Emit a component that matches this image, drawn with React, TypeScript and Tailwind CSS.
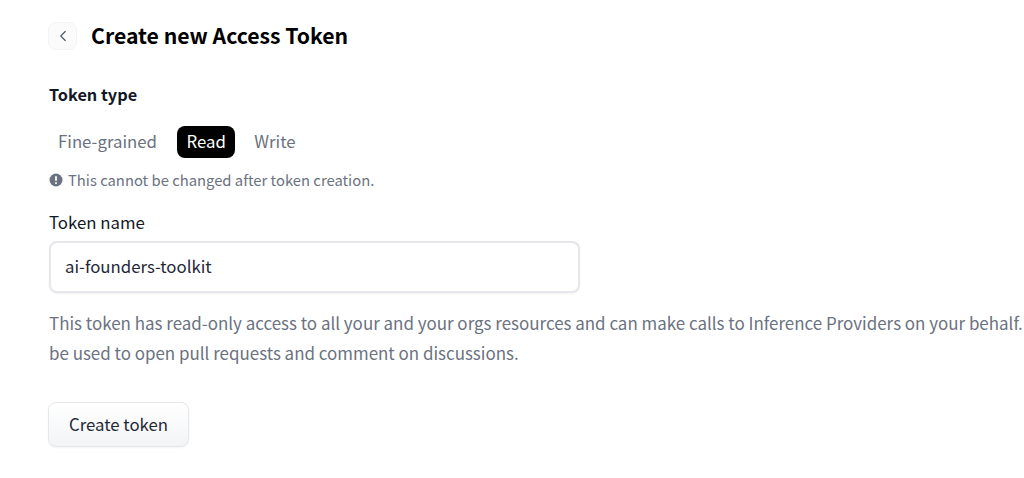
import { ChevronLeft } from 'lucide-react';

const font = { fontFamily: '"Noto Sans CJK SC", "Open Sans", sans-serif' };

export default function App() {
  return (
    <div style={font} className="w-[1024px] h-[478px] overflow-hidden bg-white pl-[49px] pt-[22px]">
      {/* Header */}
      <div className="flex items-center gap-[14px] h-[28px]">
        <button className="-ml-px flex items-center justify-center w-[29px] h-[28px] rounded-lg border border-gray-100 bg-[#fbfbfc] text-gray-600">
          <ChevronLeft className="w-[18px] h-[18px]" strokeWidth={1.5} />
        </button>
        <h1 className="text-[21.2px] leading-[26px] pb-[2px] font-bold text-black">Create new Access Token</h1>
      </div>

      {/* Token type */}
      <div className="mt-[32px] text-[16.3px] leading-[24px] font-semibold text-[#111827]">Token type</div>
      <div className="mt-[20px] flex items-center h-[32px] text-[16.8px] text-[#6b7280]">
        <span className="px-[9px]">Fine-grained</span>
        <span className="ml-[11px] px-[9.5px] h-[32px] flex items-center rounded-lg bg-black text-white">Read</span>
        <span className="ml-[10px] px-[9px]">Write</span>
      </div>
      <div className="mt-[11px] flex items-center gap-[5px] text-[14.8px] leading-[22px] text-[#6b7280]">
        <svg viewBox="0 0 14 14" className="w-[14px] h-[14px]">
          <circle cx="7" cy="7" r="6.5" fill="#6b7280" />
          <rect x="6.1" y="3" width="1.8" height="5" rx="0.9" fill="#fff" />
          <circle cx="7" cy="10" r="1" fill="#fff" />
        </svg>
        <span>This cannot be changed after token creation.</span>
      </div>

      {/* Token name */}
      <div className="mt-[19px] text-[16.8px] leading-[24px] text-[#111827]">Token name</div>
      <div className="mt-[7px] w-[531px] h-[52px] flex items-center px-[14px] rounded-lg border-2 border-gray-200 bg-white text-[16.8px] text-[#1f2937] shadow-xs">
        ai-founders-toolkit
      </div>

      <div className="mt-[15px] text-[16.95px] leading-[29.5px] text-[#6b7280] whitespace-nowrap">
        <div>This token has read-only access to all your and your orgs resources and can make calls to Inference Providers on your behalf.</div>
        <div>be used to open pull requests and comment on discussions.</div>
      </div>

      <button className="-ml-px mt-[35px] w-[141px] h-[45px] rounded-lg border border-gray-200 bg-gradient-to-b from-white to-gray-100 text-[16.8px] text-[#1f2937] shadow-xs">
        Create token
      </button>
    </div>
  );
}
